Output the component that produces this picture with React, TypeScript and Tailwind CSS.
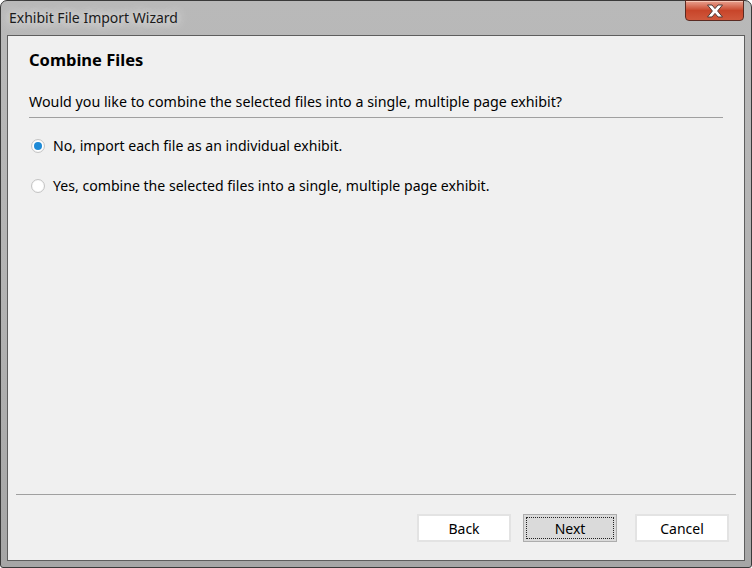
import React from "react";

function CloseGlyph() {
  return (
    <svg width="18" height="14" viewBox="0 0 18 14">
      <path
        d="M1.5 1 L6 1 L9 4.6 L12 1 L16.5 1 L11.6 7 L16.5 13 L12 13 L9 9.4 L6 13 L1.5 13 L6.4 7 Z"
        fill="#ffffff"
        stroke="#503834"
        strokeWidth="1"
        strokeLinejoin="round"
      />
    </svg>
  );
}

function Radio({ checked, label }: { checked?: boolean; label: string }) {
  return (
    <label className="flex items-center gap-[8px] h-[20px]">
      <span className="w-[14px] h-[14px] rounded-full border border-[#c4c4c4] bg-white flex items-center justify-center shadow-[inset_0_0_1px_#ddd]">
        {checked && <span className="w-[8px] h-[8px] rounded-full bg-[#1e8ad6]" />}
      </span>
      <span className="text-[14.1px] text-black">{label}</span>
    </label>
  );
}

function DlgButton({ label, focused }: { label: string; focused?: boolean }) {
  if (focused) {
    return (
      <button className="w-[94px] h-[28px] border border-[#adadad] bg-[#dadada] p-[2px]">
        <span className="w-full h-full flex items-center justify-center border border-dotted border-[#222] text-[14px] text-black">
          {label}
        </span>
      </button>
    );
  }
  return (
    <button className="w-[94px] h-[28px] border-2 border-[#e3e3e3] bg-white flex items-center justify-center text-[14px] text-black">
      {label}
    </button>
  );
}

export default function App() {
  return (
    <div className="w-[752px] h-[568px] bg-white font-['Noto_Sans',sans-serif]">
      <div className="w-[752px] h-[568px] rounded-t-[7px] rounded-b-[3px] border border-[#3a3a3a] bg-gradient-to-b from-[#b9b9b9] via-[#b3b3b3] to-[#a6a6a6] px-[6px] pb-[6px] flex flex-col">
        <div className="h-[34px] flex items-start justify-between">
          <span className="mt-[8px] ml-[2px] text-[14px] leading-[18px] text-[#1a1a1a] [text-shadow:0_0_8px_#e8e8e8,0_0_12px_#e8e8e8]">
            Exhibit File Import Wizard
          </span>
          <div className="w-[59px] h-[21px] -mt-px mr-[1px] rounded-b-[4px] border border-[#5a2a22] bg-gradient-to-b from-[#e8a08f] via-[#c8452a] to-[#d0583c] flex items-center justify-center shadow-[inset_0_1px_0_#f5c5b5]">
            <CloseGlyph />
          </div>
        </div>
        <div className="flex-1 border border-[#5e5e5e] bg-[#f0f0f0] flex flex-col">
          <div className="pl-[21px] pr-[21px] pt-[13px]">
            <h1 className="text-[16.5px] font-bold leading-[22px] text-black">Combine Files</h1>
            <p className="mt-[21px] text-[14.25px] leading-[19px] text-black">
              Would you like to combine the selected files into a single, multiple page exhibit?
            </p>
            <div className="mt-[6px] h-px bg-[#a0a0a0]" />
            <div className="mt-[18px] flex flex-col gap-[20px] pl-[2px]">
              <Radio checked label="No, import each file as an individual exhibit." />
              <Radio label="Yes, combine the selected files into a single, multiple page exhibit." />
            </div>
          </div>
          <div className="flex-1" />
          <div className="mx-[8px] h-px bg-[#a0a0a0]" />
          <div className="flex justify-end pt-[19px] pb-[18px] pr-[15px]">
            <DlgButton label="Back" />
            <div className="w-[12px]" />
            <DlgButton label="Next" focused />
            <div className="w-[18px]" />
            <DlgButton label="Cancel" />
          </div>
        </div>
      </div>
    </div>
  );
}
